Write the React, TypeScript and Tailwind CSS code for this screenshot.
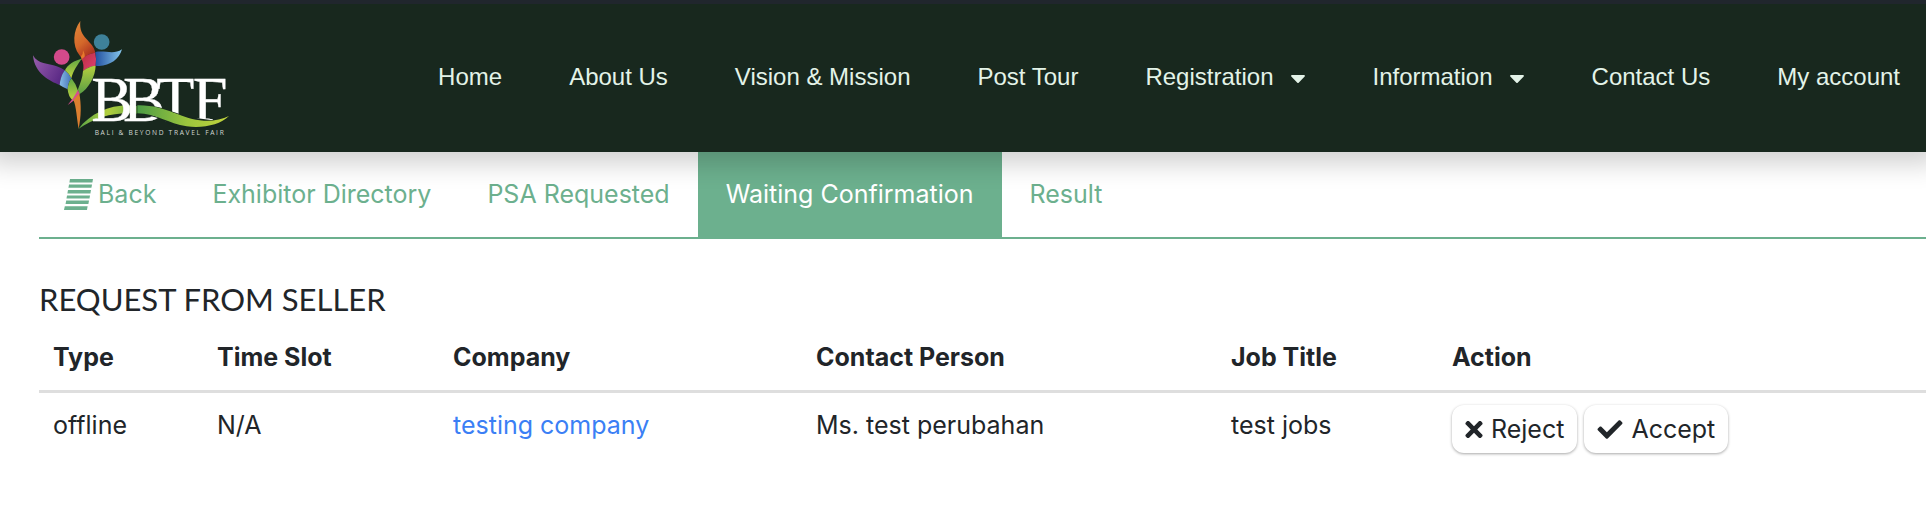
import { FaCaretDown, FaCheck, FaTimes } from "react-icons/fa";

const navItems = [
  { label: "Home" },
  { label: "About Us" },
  { label: "Vision & Mission" },
  { label: "Post Tour" },
  { label: "Registration", dropdown: true },
  { label: "Information", dropdown: true },
  { label: "Contact Us" },
  { label: "My account" },
];

const tabs = ["Exhibitor Directory", "PSA Requested", "Waiting Confirmation", "Result"];

const requests = [
  {
    type: "offline",
    slot: "N/A",
    company: "testing company",
    contact: "Ms. test perubahan",
    job: "test jobs",
  },
];

function Logo() {
  return (
    <svg viewBox="96 60 594 351" className="h-[117px] w-[198px]" role="img" aria-label="BBTF">
      <defs>
        <linearGradient id="purple" x1="0" y1="0" x2="1" y2="0.5">
          <stop offset="0" stopColor="#9a5fae" />
          <stop offset="1" stopColor="#5b2a86" />
        </linearGradient>
        <linearGradient id="orange" x1="0" y1="0" x2="0.5" y2="1">
          <stop offset="0" stopColor="#e08a3a" />
          <stop offset="0.6" stopColor="#d4682a" />
          <stop offset="1" stopColor="#ad3420" />
        </linearGradient>
        <linearGradient id="blue" x1="0" y1="0" x2="1" y2="0">
          <stop offset="0" stopColor="#2350a0" />
          <stop offset="1" stopColor="#86c8ec" />
        </linearGradient>
        <linearGradient id="sky" x1="0" y1="0" x2="1" y2="0">
          <stop offset="0" stopColor="#86bce6" />
          <stop offset="1" stopColor="#4673b8" />
        </linearGradient>
        <linearGradient id="leaf" x1="0" y1="0" x2="0" y2="1">
          <stop offset="0" stopColor="#5fa544" />
          <stop offset="1" stopColor="#c3d63f" />
        </linearGradient>
        <linearGradient id="stem" x1="0" y1="0" x2="0" y2="1">
          <stop offset="0" stopColor="#b5cf3e" />
          <stop offset="1" stopColor="#5a9e45" />
        </linearGradient>
        <linearGradient id="rose" x1="0" y1="0" x2="1" y2="1">
          <stop offset="0" stopColor="#bb2f3c" />
          <stop offset="1" stopColor="#de3f78" />
        </linearGradient>
        <linearGradient id="swoosh" x1="0" y1="0" x2="1" y2="0">
          <stop offset="0" stopColor="#4d9c45" />
          <stop offset="0.55" stopColor="#9dc63d" />
          <stop offset="1" stopColor="#c2d43c" />
        </linearGradient>
        <linearGradient id="tail" x1="0" y1="0" x2="1" y2="0">
          <stop offset="0" stopColor="#5aa546" />
          <stop offset="0.5" stopColor="#b2cf3e" />
          <stop offset="1" stopColor="#6aac42" />
        </linearGradient>
      </defs>

      {/* heads */}
      <circle cx="185" cy="171" r="23.5" fill="#d24a8a" />
      <circle cx="305" cy="126" r="23.5" fill="#3e8199" />

      {/* left figure */}
      <path d="M99 166C113 193 145 190 170 199Q184 204 194 211Q182 229 179 255C150 244 103 221 99 166Z" fill="url(#purple)" />
      <path d="M194 211Q207 220 214 235Q204 249 203 268Q191 263 179 255Q181 230 194 211Z" fill="url(#sky)" />
      <path d="M245 176C226 180 200 195 195 211Q207 220 214 235C219 213 233 194 245 176Z" fill="url(#leaf)" />
      <path d="M214 235Q227 250 234 272L219 303Q204 288 203 268Q204 249 214 235Z" fill="url(#leaf)" />

      {/* right figure */}
      <path d="M241 63C219 91 216 137 238 165L247 178Q263 160 286 158C280 121 235 116 241 63Z" fill="url(#orange)" />
      <path d="M249 151Q257 166 253 176L245 180L243 169Q250 162 249 151Z" fill="#e5792d" />
      <path d="M286 158Q290 178 287 197Q264 200 249 213Q253 194 245 178Q262 160 286 158Z" fill="url(#rose)" />
      <path d="M286 156C316 151 342 165 366 148C357 180 324 202 287 197Q290 176 286 156Z" fill="url(#blue)" />
      <path d="M249 213Q265 199 287 197C286 229 266 266 239 282Q234 276 234 268C241 249 248 232 249 213Z" fill="url(#stem)" />

      {/* stem */}
      <path d="M234 270L239 282Q226 300 203 315Q220 297 234 270Z" fill="#d94d90" />
      <path d="M220 300L238 280C244 315 244 348 236 386C230 355 229 318 220 300Z" fill="#dc7f30" />

      {/* ribbon behind the first two letters */}
      <path d="M235 387C270 342 325 316 385 316L412 318V341C350 335 290 348 235 387Z" fill="url(#tail)" />
      <text
        x="274 369 469 578"
        y="362"
        fill="#fff"
        stroke="#fff"
        strokeWidth="1"
        fontFamily="'Liberation Serif', serif"
        fontSize="187"
      >
        BBTF
      </text>
      {/* ribbon crossing the letters */}
      <path d="M470 338L660 364V372L540 384L500 368Z" fill="#18281e" />
      <path
        d="M412 316C500 314 545 360 612 362Q654 364 687 348C660 375 610 385 560 379C505 372 470 340 412 340Z"
        fill="url(#swoosh)"
        stroke="#18281e"
        strokeWidth="4"
        paintOrder="stroke"
      />
      <text
        x="284"
        y="405"
        fill="#d3d9d4"
        fontFamily="'Open Sans', sans-serif"
        fontSize="20"
        letterSpacing="5"
      >
        BALI &amp; BEYOND TRAVEL FAIR
      </text>
    </svg>
  );
}

function BackIcon() {
  return (
    <svg viewBox="0 0 29 31" className="mt-[3px] h-[31px] w-[29px]" fill="currentColor" aria-hidden="true">
      <path d="M6 0H29L28.4 3.6H5.4Z" />
      <path d="M5 5.6H28L27.4 8.8H4.4Z" />
      <path d="M4 11H27L26.4 14.4H3.4Z" />
      <path d="M3 16.6H26L25.5 19.6H2.5Z" />
      <path d="M2.2 21.6H25L24.4 25H1.6Z" />
      <path d="M0.8 27.2H23.6L23 31H0Z" />
    </svg>
  );
}

export default function App() {
  return (
    <div className="min-h-screen overflow-x-hidden bg-white font-['Inter',sans-serif] text-[25px] text-[#212529]">
      <header className="relative z-10 flex h-[152px] items-center justify-between border-t-4 border-[#20262d] bg-[#18281e] pr-[26px] pl-8 shadow-[0_0_24px_12px_rgba(0,0,0,0.18)]">
        <a href="#" className="shrink-0">
          <Logo />
        </a>
        <nav className="flex items-center gap-[67px] pb-0.5 font-['Liberation_Sans',sans-serif] text-2xl whitespace-nowrap text-[#e3f3e8]">
          {navItems.map((item) => (
            <a key={item.label} href="#" className="flex items-center gap-4">
              {item.label}
              {item.dropdown && <FaCaretDown className="mt-0.5 w-4" />}
            </a>
          ))}
        </nav>
      </header>

      <main className="pl-[39px]">
        <nav className="flex h-[87px] border-b-2 border-[#6cb08e] leading-9 whitespace-nowrap text-[#6cb08e]">
          <a href="#" className="flex items-start gap-[5px] pt-6 pr-7 pl-[25px]">
            <BackIcon />
            Back
          </a>
          {tabs.map((tab) => (
            <a
              key={tab}
              href="#"
              className={
                tab === "Waiting Confirmation"
                  ? "bg-[#6cb08e] px-7 pt-6 text-white"
                  : "px-7 pt-6"
              }
            >
              {tab}
            </a>
          ))}
        </nav>

        <h1 className="mt-[42px] font-['Lato',sans-serif] text-[31px] leading-9">REQUEST FROM SELLER</h1>

        <table className="mt-3.5 w-full table-fixed text-left leading-9">
          <thead>
            <tr className="border-b-[3px] border-[#dedede]">
              <th className="w-[164px] px-3.5 pt-2 pb-[15px] font-bold">Type</th>
              <th className="w-[236px] px-3.5 pt-2 pb-[15px] font-bold">Time Slot</th>
              <th className="w-[363px] px-3.5 pt-2 pb-[15px] font-bold">Company</th>
              <th className="w-[415px] px-3.5 pt-2 pb-[15px] font-bold">Contact Person</th>
              <th className="w-[221px] px-3.5 pt-2 pb-[15px] font-bold">Job Title</th>
              <th className="px-3.5 pt-2 pb-[15px] font-bold">Action</th>
            </tr>
          </thead>
          <tbody>
            {requests.map((request) => (
              <tr key={request.company} className="align-top">
                <td className="px-3.5 py-3.5">{request.type}</td>
                <td className="px-3.5 py-3.5">{request.slot}</td>
                <td className="px-3.5 py-3.5">
                  <a href="#" className="text-[#3b7ff5]">
                    {request.company}
                  </a>
                </td>
                <td className="px-3.5 py-3.5">{request.contact}</td>
                <td className="px-3.5 py-3.5">{request.job}</td>
                <td className="px-3.5 py-3">
                  <div className="flex gap-[7px]">
                    <button className="flex h-12 items-center gap-2 rounded-xl bg-white px-[13px] shadow-[0_1px_3px_rgba(0,0,0,0.35)]">
                      <FaTimes className="w-[18px]" />
                      Reject
                    </button>
                    <button className="flex h-12 items-center gap-2 rounded-xl bg-white px-[13px] shadow-[0_1px_3px_rgba(0,0,0,0.35)]">
                      <FaCheck className="w-[26px]" />
                      Accept
                    </button>
                  </div>
                </td>
              </tr>
            ))}
          </tbody>
        </table>
      </main>
    </div>
  );
}
